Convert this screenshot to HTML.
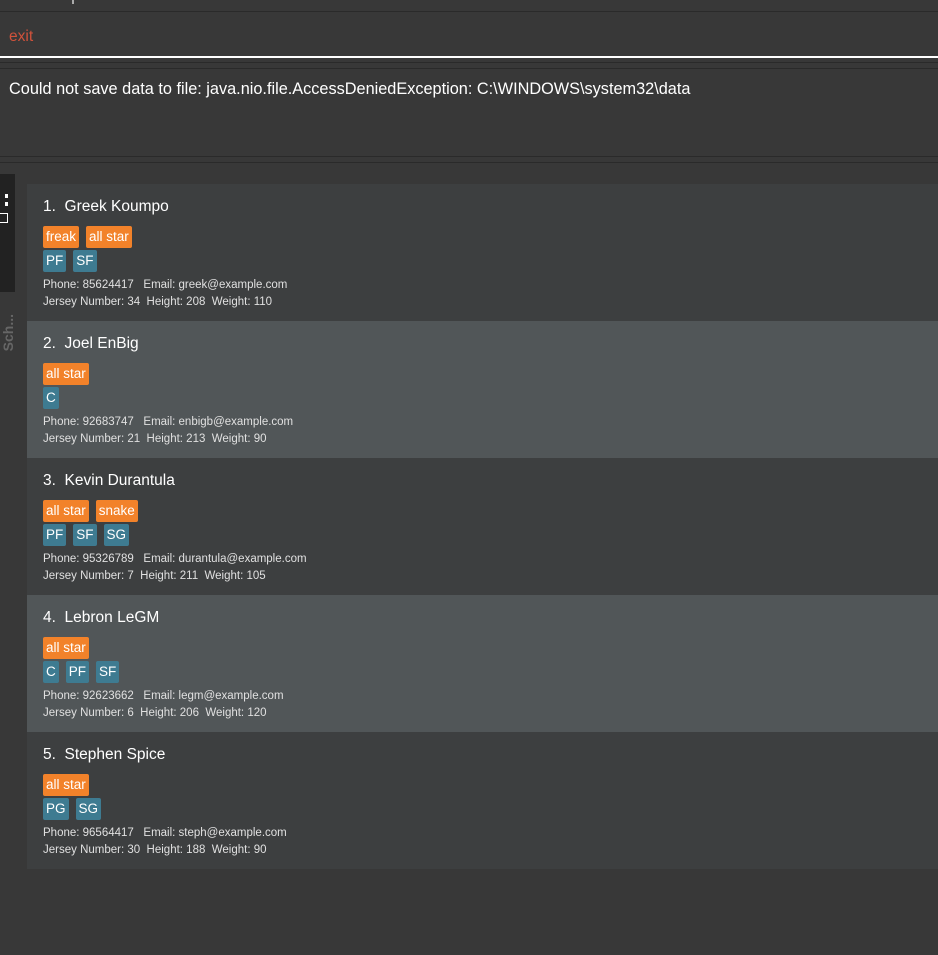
<!DOCTYPE html>
<html><head><style>
body{margin:0;width:938px;height:955px;background:#383838;font-family:"Liberation Sans",sans-serif;position:relative;overflow:hidden;color:#fff}
.a{position:absolute}
.card{position:absolute;left:27px;width:911px;height:137px}
.name{position:absolute;left:16px;top:14px;font-size:15.5px;color:#fff}
.tags{position:absolute;left:16px;display:flex;gap:7px}
.t{height:22px;line-height:22px;padding:0 3px;font-size:13.5px;border-radius:2px;color:#fff}
.o{background:#f2822a}.b{background:#3e7b91}
.info{position:absolute;left:16px;font-size:11.5px;color:#e0e0e0;line-height:17px}
</style></head><body>
<div class="a" style="left:0;top:11px;width:938px;height:1px;background:#2a2a2a"></div>
<div class="a" style="left:72px;top:0;width:2px;height:4px;background:#aaa"></div>
<div class="a" style="left:9px;top:28px;font-size:15.5px;color:#d0523b">exit</div>
<div class="a" style="left:0;top:56px;width:938px;height:2px;background:#fff"></div>
<div class="a" style="left:0;top:62px;width:938px;height:1px;background:#2a2a2a"></div>
<div class="a" style="left:0;top:68px;width:938px;height:1px;background:#2a2a2a"></div>
<div class="a" style="left:9px;top:80px;font-size:16.3px;color:#fff">Could not save data to file: java.nio.file.AccessDeniedException: C:\WINDOWS\system32\data</div>
<div class="a" style="left:0;top:156px;width:938px;height:1px;background:#2a2a2a"></div>
<div class="a" style="left:0;top:162px;width:938px;height:1px;background:#2a2a2a"></div>
<div class="a" style="left:0;top:174px;width:15px;height:118px;background:#222"></div>
<div class="a" style="left:5px;top:194px;width:3px;height:12px;border-left:3px dotted #fff"></div>
<div class="a" style="left:0;top:213px;width:7px;height:8px;border:1px solid #fff;border-left:none"></div>
<div class="a" style="left:0;top:314px;font-size:14px;font-weight:bold;color:#666;writing-mode:vertical-rl;transform:rotate(180deg)">Sch...</div>

<div class="card" style="top:184px;background:#3d3f40">
<div class="name">1.&nbsp; Greek Koumpo</div>
<div class="tags" style="top:42px"><span class="t o">freak</span><span class="t o">all star</span></div>
<div class="tags" style="top:66px"><span class="t b">PF</span><span class="t b">SF</span></div>
<div class="info" style="top:93px">Phone: 85624417&nbsp;&nbsp; Email: greek@example.com<br>Jersey Number: 34&nbsp; Height: 208&nbsp; Weight: 110</div>
</div>
<div class="card" style="top:321px;background:#515658">
<div class="name">2.&nbsp; Joel EnBig</div>
<div class="tags" style="top:42px"><span class="t o">all star</span></div>
<div class="tags" style="top:66px"><span class="t b">C</span></div>
<div class="info" style="top:93px">Phone: 92683747&nbsp;&nbsp; Email: enbigb@example.com<br>Jersey Number: 21&nbsp; Height: 213&nbsp; Weight: 90</div>
</div>
<div class="card" style="top:458px;background:#3d3f40">
<div class="name">3.&nbsp; Kevin Durantula</div>
<div class="tags" style="top:42px"><span class="t o">all star</span><span class="t o">snake</span></div>
<div class="tags" style="top:66px"><span class="t b">PF</span><span class="t b">SF</span><span class="t b">SG</span></div>
<div class="info" style="top:93px">Phone: 95326789&nbsp;&nbsp; Email: durantula@example.com<br>Jersey Number: 7&nbsp; Height: 211&nbsp; Weight: 105</div>
</div>
<div class="card" style="top:595px;background:#515658">
<div class="name">4.&nbsp; Lebron LeGM</div>
<div class="tags" style="top:42px"><span class="t o">all star</span></div>
<div class="tags" style="top:66px"><span class="t b">C</span><span class="t b">PF</span><span class="t b">SF</span></div>
<div class="info" style="top:93px">Phone: 92623662&nbsp;&nbsp; Email: legm@example.com<br>Jersey Number: 6&nbsp; Height: 206&nbsp; Weight: 120</div>
</div>
<div class="card" style="top:732px;background:#3d3f40">
<div class="name">5.&nbsp; Stephen Spice</div>
<div class="tags" style="top:42px"><span class="t o">all star</span></div>
<div class="tags" style="top:66px"><span class="t b">PG</span><span class="t b">SG</span></div>
<div class="info" style="top:93px">Phone: 96564417&nbsp;&nbsp; Email: steph@example.com<br>Jersey Number: 30&nbsp; Height: 188&nbsp; Weight: 90</div>
</div>
</body></html>
